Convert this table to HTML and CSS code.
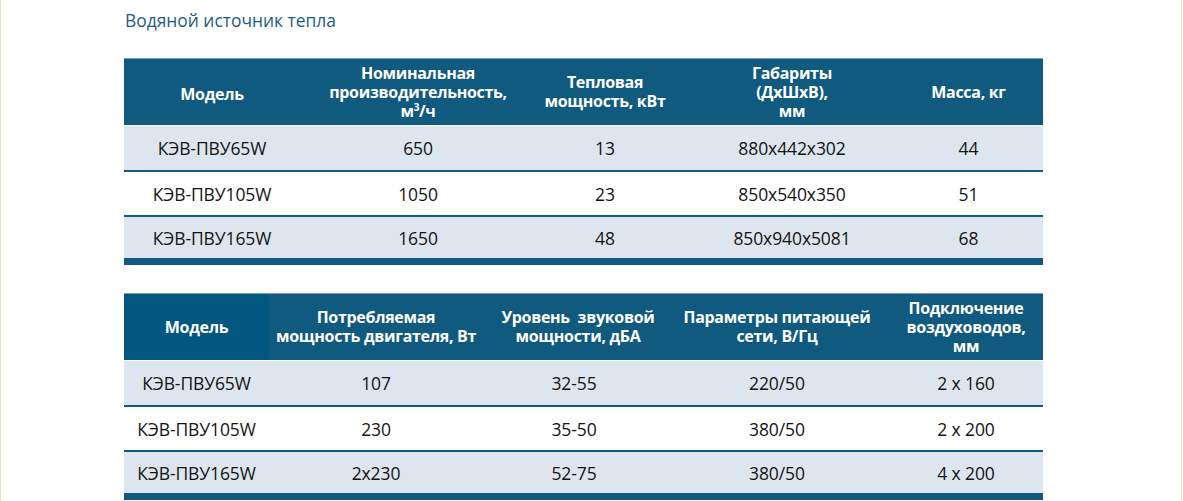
FILE: index.html
```html
<!DOCTYPE html>
<html lang="ru">
<head>
<meta charset="utf-8">
<title>Водяной источник тепла</title>
<link rel="stylesheet" href="styles.css">
</head>
<body>
<div class="page">
  <h1 class="title">Водяной источник тепла</h1>

  <table class="spec spec-1">
    <colgroup>
      <col style="width:176px"><col style="width:236px"><col style="width:138px"><col style="width:236px"><col style="width:133px">
    </colgroup>
    <thead>
      <tr>
        <th class="th-low">Модель</th>
        <th>Номинальная<br>производительность,<br>м<sup>3</sup>/ч</th>
        <th>Тепловая<br>мощность, кВт</th>
        <th>Габариты<br>(ДхШхВ),<br>мм</th>
        <th class="c-last">Масса, кг</th>
      </tr>
    </thead>
    <tbody>
      <tr class="row-a"><td>КЭВ-ПВУ65W</td><td>650</td><td>13</td><td>880x442x302</td><td class="c-last">44</td></tr>
      <tr class="row-b"><td>КЭВ-ПВУ105W</td><td>1050</td><td>23</td><td>850x540x350</td><td class="c-last">51</td></tr>
      <tr class="row-c"><td>КЭВ-ПВУ165W</td><td>1650</td><td>48</td><td>850x940x5081</td><td class="c-last">68</td></tr>
    </tbody>
  </table>

  <table class="spec spec-2">
    <colgroup>
      <col style="width:145px"><col style="width:214px"><col style="width:190px"><col style="width:208px"><col style="width:162px">
    </colgroup>
    <thead>
      <tr>
        <th class="th-model">Модель</th>
        <th>Потребляемая<br>мощность двигателя, Вт</th>
        <th>Уровень&nbsp; звуковой<br>мощности, дБА</th>
        <th>Параметры питающей<br>сети, В/Гц</th>
        <th class="c-right">Подключение<br>воздуховодов,<br>мм</th>
      </tr>
    </thead>
    <tbody>
      <tr class="row-a"><td>КЭВ-ПВУ65W</td><td>107</td><td class="c-left">32-55</td><td>220/50</td><td class="c-right">2 x 160</td></tr>
      <tr class="row-b"><td>КЭВ-ПВУ105W</td><td>230</td><td class="c-left">35-50</td><td>380/50</td><td class="c-right">2 x 200</td></tr>
      <tr class="row-c"><td>КЭВ-ПВУ165W</td><td>2x230</td><td class="c-left">52-75</td><td>380/50</td><td class="c-right">4 x 200</td></tr>
    </tbody>
  </table>
</div>
</body>
</html>
```
FILE: styles.css
```css
html, body {
  margin: 0;
  padding: 0;
  background: #ffffff;
}

.page {
  box-sizing: border-box;
  width: 1182px;
  height: 501px;
  border-left: 1px solid #e6dfca;
  border-right: 1px solid #e6dfca;
  padding: 9px 0 0 123px;
  overflow: hidden;
  font-family: "Open Sans", "Noto Sans", sans-serif;
}

.title {
  margin: 0 0 26px 1px;
  font-size: 17.4px;
  font-weight: 400;
  line-height: 23px;
  color: #1b5d88;
  letter-spacing: 0;
}

.spec {
  table-layout: fixed;
  width: 919px;
  border-collapse: separate;
  border-spacing: 0;
}

.spec-1 {
  margin-bottom: 28px;
}

.spec th {
  box-sizing: border-box;
  background: #0f5a7e;
  color: #ffffff;
  font-size: 16px;
  font-weight: 700;
  line-height: 19px;
  letter-spacing: -0.3px;
  text-align: center;
  vertical-align: middle;
  padding: 0;
  height: 68px;
  border-top: 1px solid #7a9fb5;
  border-bottom: 1px solid #ffffff;
}

.spec th sup {
  font-size: 10px;
  line-height: 0;
}

.spec .th-low {
  padding-top: 5px;
}

.spec .th-model {
  background: #025781;
}

.spec td {
  box-sizing: border-box;
  padding: 0;
  text-align: center;
  vertical-align: middle;
  font-size: 17.5px;
  color: #141414;
  letter-spacing: -0.1px;
}

.spec .c-last {
  padding-right: 16px;
}

.spec .c-right {
  padding-left: 8px;
}

.spec .c-left {
  padding-right: 8px;
}

.row-a td {
  background: #dde6ee;
  height: 46px;
  border-bottom: 2px solid #115b80;
}

.row-b td {
  background: #ffffff;
  height: 45px;
  border-bottom: 2px solid #115b80;
}

.row-c td {
  background: #dde6ee;
  height: 48px;
  border-bottom: 7px solid #0f5a7e;
}
```
